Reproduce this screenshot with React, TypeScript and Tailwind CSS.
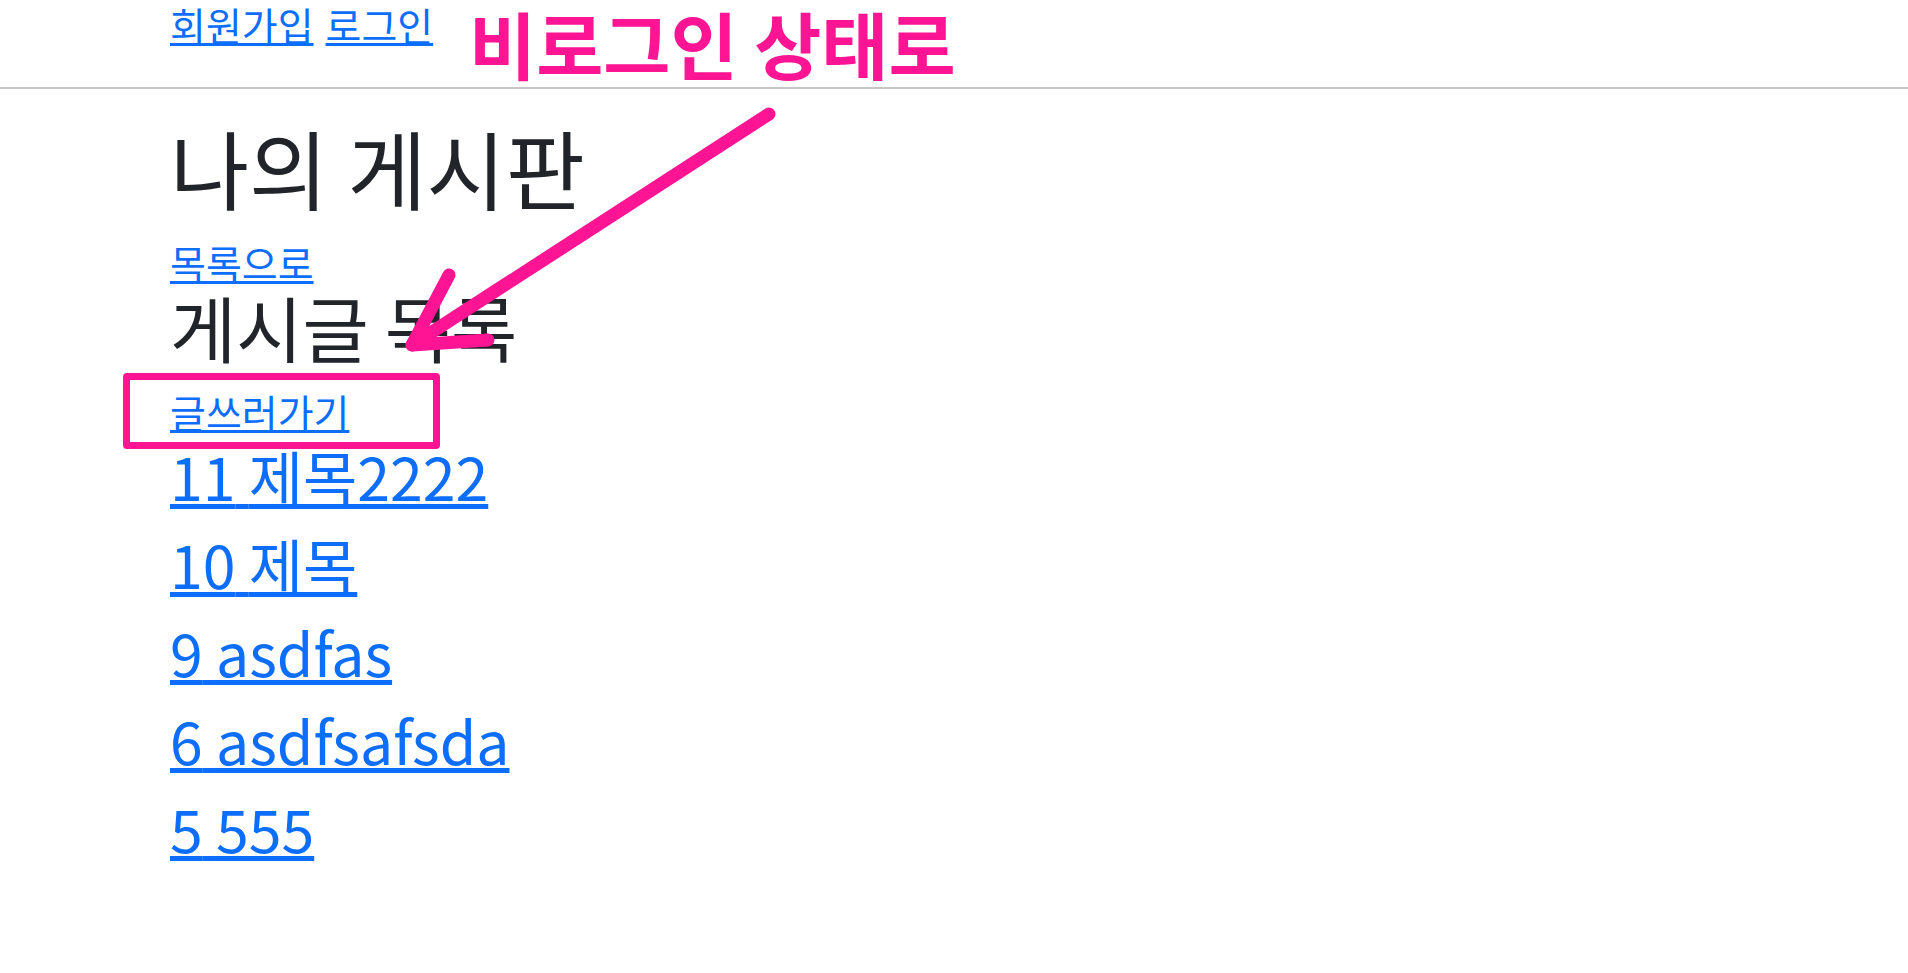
import React from "react";

const posts = [
  { id: 11, title: "제목2222" },
  { id: 10, title: "제목" },
  { id: 9, title: "asdfas" },
  { id: 6, title: "asdfsafsda" },
  { id: 5, title: "555" },
];

export default function App() {
  return (
    <div className="relative min-h-[973px] bg-white font-['Noto_Sans_CJK_KR',sans-serif] text-[#212529]">
      {/* header */}
      <div className="h-[89px] border-b-2 border-[#c6c6c6] pl-[170px]">
        <div className="flex gap-[12px] text-[39px] leading-[48px]">
          <a href="#" className="text-[#0d6efd] underline">
            회원가입
          </a>
          <a href="#" className="text-[#0d6efd] underline">
            로그인
          </a>
        </div>
      </div>

      <main className="pl-[170px]">
        <h1 className="mt-[28px] text-[86px] font-normal leading-[100px]">나의 게시판</h1>
        <div className="mt-[21px] text-[39px] leading-[48px]">
          <a href="#" className="text-[#0d6efd] underline">
            목록으로
          </a>
        </div>
        <h2 className="text-[72px] font-normal leading-[80px]">게시글 목록</h2>
        <div className="mt-[21px] text-[39px] leading-[48px]">
          <a href="#" className="text-[#0d6efd] underline">
            글쓰러가기
          </a>
        </div>
        <ul className="mt-[6px] flex flex-col gap-[18px]">
          {posts.map((p) => (
            <li key={p.id} className="text-[59px] leading-[70px]">
              <a href="#" className="text-[#0d6efd] underline">
                {p.id} {p.title}
              </a>
            </li>
          ))}
        </ul>
      </main>

      {/* annotation */}
      <div className="absolute left-[469px] top-[6px] whitespace-nowrap text-[73px] font-bold leading-[73px] text-[#ff1493]">
        비로그인 상태로
      </div>
      <div className="pointer-events-none absolute left-[123px] top-[373px] h-[76px] w-[317px] rounded-[4px] border-[7px] border-[#ff1493]" />
      <svg
        className="pointer-events-none absolute left-0 top-0"
        width="1908"
        height="973"
        viewBox="0 0 1908 973"
        fill="none"
      >
        <g stroke="#ff1493" strokeWidth="13" strokeLinecap="round" strokeLinejoin="round">
          <path d="M769 114 L412 345" />
          <path d="M449 275 L412 345 L488 340" />
        </g>
      </svg>
    </div>
  );
}
